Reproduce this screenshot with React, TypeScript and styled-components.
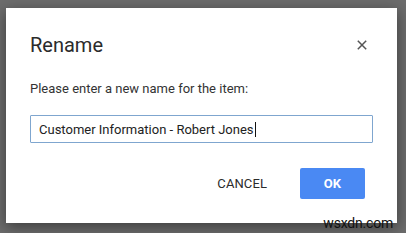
import React from "react";
import styled, { createGlobalStyle } from "styled-components";

const GlobalStyle = createGlobalStyle`
  html, body {
    margin: 0;
    padding: 0;
    background: #6e6e6e;
  }
  body {
    font-family: Roboto, "Liberation Sans", Arial, sans-serif;
  }
`;

const Backdrop = styled.div`
  position: relative;
  width: 406px;
  height: 233px;
  padding: 8px 0 0 6px;
  box-sizing: border-box;
  background: #6c6c6c;
  overflow: hidden;
`;

const Dialog = styled.div`
  width: 391px;
  height: 215px;
  box-sizing: border-box;
  background: #fff;
  padding: 25px 24px 0 24px;
  box-shadow: 0 4px 14px rgba(0, 0, 0, 0.45);
  display: flex;
  flex-direction: column;
`;

const Header = styled.div`
  display: flex;
  align-items: center;
  justify-content: space-between;
  height: 24px;
`;

const Title = styled.h2`
  margin: 0;
  font-size: 20px;
  line-height: 24px;
  font-weight: 400;
  color: #2b2b2b;
`;

const CloseButton = styled.button`
  border: 0;
  background: none;
  padding: 0;
  margin-right: 6px;
  width: 10px;
  height: 10px;
  display: flex;
  cursor: pointer;
`;

const Message = styled.p`
  margin: 24px 0 0;
  font-size: 13px;
  line-height: 16px;
  color: #333;
`;

const NameInput = styled.div`
  margin-top: 18px;
  height: 28px;
  box-sizing: border-box;
  border: 1px solid #7fa6cf;
  border-radius: 1px;
  padding: 0 8px;
  display: flex;
  align-items: center;
  font-size: 13px;
  color: #222;
`;

const Caret = styled.span`
  display: inline-block;
  width: 1px;
  height: 15px;
  background: #111;
  margin-left: 1px;
`;

const Footer = styled.div`
  display: flex;
  justify-content: flex-end;
  align-items: center;
  gap: 21px;
  margin-top: 25px;
  padding-right: 8px;
`;

const ActionButton = styled.button<{ $primary?: boolean }>`
  height: 31px;
  min-width: 65px;
  padding: 0 12px;
  border: 0;
  border-radius: 2px;
  font-family: Roboto, "Liberation Sans", Arial, sans-serif;
  font-size: 13px;
  font-weight: ${(p) => (p.$primary ? 700 : 400)};
  letter-spacing: 0.1px;
  background: ${(p) => (p.$primary ? "#4a89f3" : "transparent")};
  color: ${(p) => (p.$primary ? "#fff" : "#2b2b2b")};
  cursor: pointer;
`;

const Watermark = styled.span`
  position: absolute;
  right: 13px;
  bottom: 2px;
  font-size: 14px;
  color: #111;
  letter-spacing: -0.2px;
`;

export default function App() {
  return (
    <>
      <GlobalStyle />
      <Backdrop>
        <Dialog>
          <Header>
            <Title>Rename</Title>
            <CloseButton aria-label="Close">
              <svg width="10" height="10" viewBox="0 0 10 10">
                <path
                  d="M0.8 0.8L9.2 9.2M9.2 0.8L0.8 9.2"
                  stroke="#555"
                  strokeWidth="1.5"
                />
              </svg>
            </CloseButton>
          </Header>
          <Message>Please enter a new name for the item:</Message>
          <NameInput>
            Customer Information - Robert Jones
            <Caret />
          </NameInput>
          <Footer>
            <ActionButton>CANCEL</ActionButton>
            <ActionButton $primary>OK</ActionButton>
          </Footer>
        </Dialog>
        <Watermark>wsxdn.com</Watermark>
      </Backdrop>
    </>
  );
}
